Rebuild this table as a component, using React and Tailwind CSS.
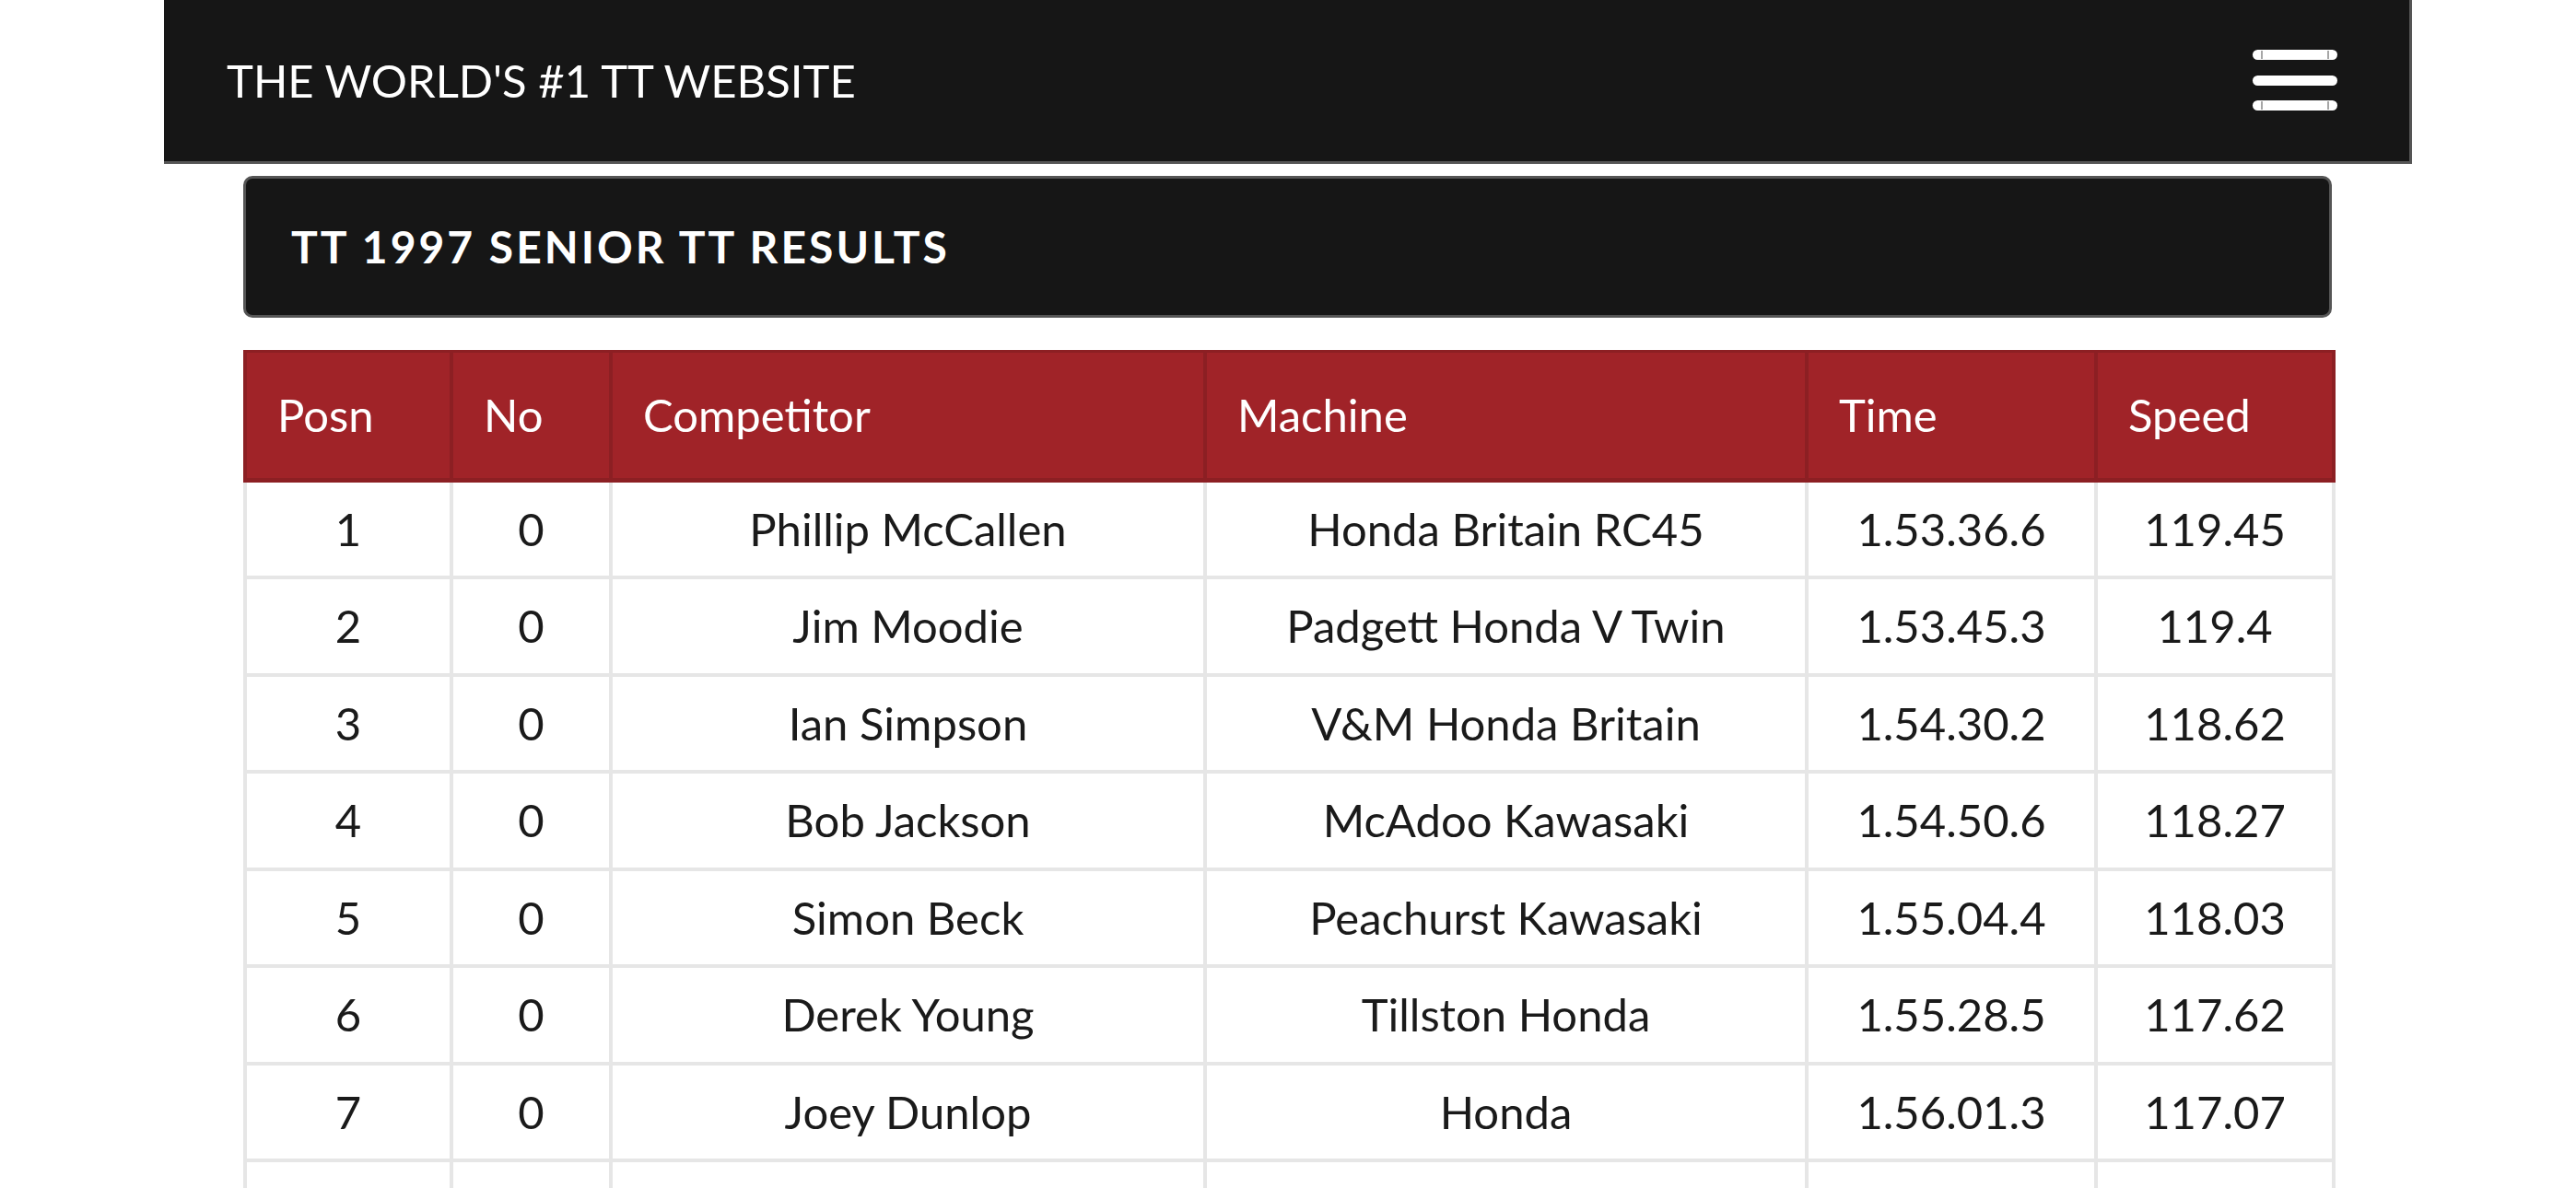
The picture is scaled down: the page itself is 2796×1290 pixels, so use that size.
const rows = [
  { posn: 1, no: 0, competitor: 'Phillip McCallen', machine: 'Honda Britain RC45', time: '1.53.36.6', speed: '119.45' },
  { posn: 2, no: 0, competitor: 'Jim Moodie', machine: 'Padgett Honda V Twin', time: '1.53.45.3', speed: '119.4' },
  { posn: 3, no: 0, competitor: 'Ian Simpson', machine: 'V&M Honda Britain', time: '1.54.30.2', speed: '118.62' },
  { posn: 4, no: 0, competitor: 'Bob Jackson', machine: 'McAdoo Kawasaki', time: '1.54.50.6', speed: '118.27' },
  { posn: 5, no: 0, competitor: 'Simon Beck', machine: 'Peachurst Kawasaki', time: '1.55.04.4', speed: '118.03' },
  { posn: 6, no: 0, competitor: 'Derek Young', machine: 'Tillston Honda', time: '1.55.28.5', speed: '117.62' },
  { posn: 7, no: 0, competitor: 'Joey Dunlop', machine: 'Honda', time: '1.56.01.3', speed: '117.07' },
  { posn: 8, no: 0, competitor: 'Nick Jefferies', machine: 'Honda', time: '1.56.40.0', speed: '116.42' },
]

const columns = [
  { key: 'posn', label: 'Posn', width: 'w-[224px]' },
  { key: 'no', label: 'No', width: 'w-[173px]' },
  { key: 'competitor', label: 'Competitor', width: 'w-[645px]' },
  { key: 'machine', label: 'Machine', width: 'w-[653px]' },
  { key: 'time', label: 'Time', width: 'w-[314px]' },
  { key: 'speed', label: 'Speed', width: 'w-[258px]' },
]

const MenuIcon = () => (
  <svg width="94" height="70" viewBox="0 0 94 70" aria-hidden="true">
    <rect x="1" y="1" width="92" height="11" rx="5.5" fill="#fff" />
    <rect x="1" y="29" width="92" height="11" rx="5.5" fill="#fff" />
    <rect x="1" y="56" width="92" height="11" rx="5.5" fill="#fff" />
    <line x1="11" y1="2" x2="11" y2="11" stroke="#888" strokeWidth="1.5" />
    <line x1="83" y1="2" x2="83" y2="11" stroke="#888" strokeWidth="1.5" />
    <line x1="11" y1="57" x2="11" y2="66" stroke="#888" strokeWidth="1.5" />
    <line x1="83" y1="57" x2="83" y2="66" stroke="#888" strokeWidth="1.5" />
  </svg>
)

export default function App() {
  return (
    <div className="min-h-screen bg-white font-['Lato','Liberation_Sans',sans-serif]">
      <header className="ml-[178px] flex h-[178px] w-[2440px] items-center justify-between border-r-[3px] border-b-[3px] border-[#555] bg-[#161616] pl-[68px] pr-[77px]">
        <span className="text-[49px] leading-none text-white">THE WORLD'S #1 TT WEBSITE</span>
        <button type="button" className="flex items-center">
          <MenuIcon />
        </button>
      </header>

      <main className="ml-[264px] w-[2267px]">
        <div className="mt-[13px] flex h-[154px] items-center rounded-[10px] border-[3px] border-[#555] bg-[#161616] pl-[49px]">
          <h1 className="text-[48px] font-bold leading-none tracking-[3px] text-white">TT 1997 SENIOR TT RESULTS</h1>
        </div>

        <table className="mt-[35px] w-[2267px] table-fixed border-collapse">
          <thead>
            <tr className="h-[140px] bg-[#a02328]">
              {columns.map((col) => (
                <th
                  key={col.key}
                  className={`${col.width} border-x-[4px] border-t-[3px] border-b-[5px] border-[#8c1f23] pl-[33px] text-left text-[49px] font-normal text-white`}
                >
                  {col.label}
                </th>
              ))}
            </tr>
          </thead>
          <tbody>
            {rows.map((row) => (
              <tr key={row.posn} className="h-[105.5px]">
                {columns.map((col) => (
                  <td
                    key={col.key}
                    className="border-[4px] border-[#e6e6e6] text-center text-[49px] text-[#1a1a1a]"
                  >
                    {row[col.key]}
                  </td>
                ))}
              </tr>
            ))}
          </tbody>
        </table>
      </main>
    </div>
  )
}
